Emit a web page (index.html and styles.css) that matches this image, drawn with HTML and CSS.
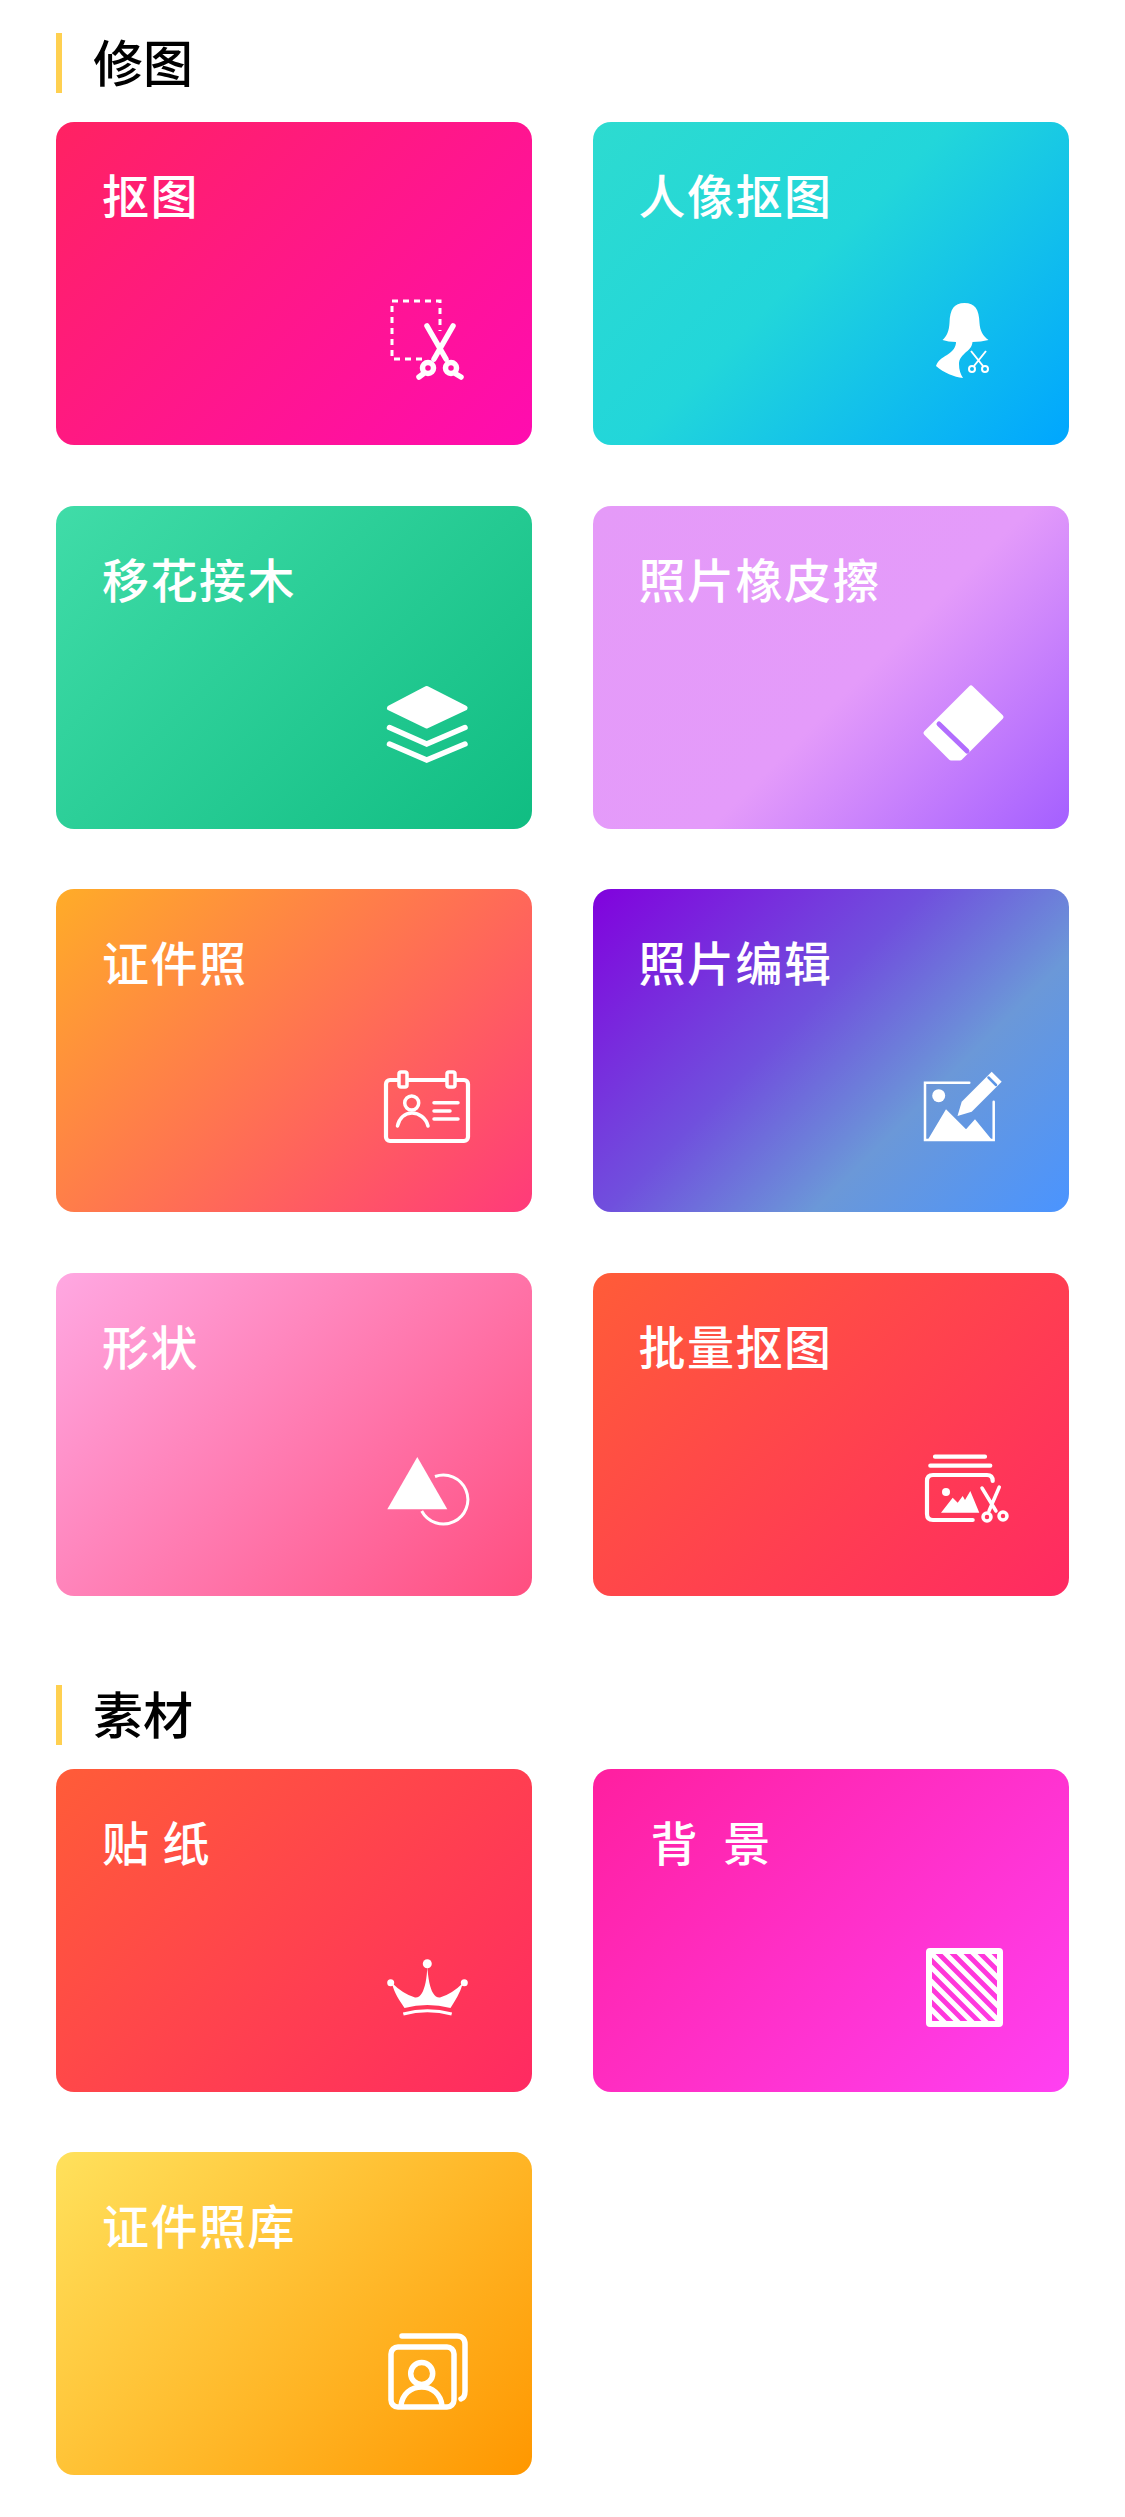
FILE: index.html
```html
<!DOCTYPE html>
<html lang="zh-CN">
<head>
    <meta charset="UTF-8">
    <meta name="viewport" content="width=device-width, initial-scale=1.0">
    <title>修图</title>
    <link rel="stylesheet" href="styles.css">
</head>
<body>
    <main>
        <section class="section">
            <h2 class="section-title">修图</h2>
            <div class="grid">
                <a class="card cutout">
                    <span class="card-title">抠图</span>
                    <svg class="icon" viewBox="0 0 100 100">
                        <path class="dash" d="M44 70H14V12H62V42"/>
                        <path class="blade" d="M49 37L68 70M75 37L56 70"/>
                        <circle class="blade" cx="50" cy="79" r="5.500"/>
                        <circle class="blade" cx="73" cy="79" r="5.500"/>
                        <path class="blade" d="M45 85L41 88M78 85L83 88"/>
                    </svg>
                </a>
                <a class="card portrait">
                    <span class="card-title">人像抠图</span>
                    <svg class="icon" viewBox="0 0 100 100">
                        <path class="solid" d="M27.500 51C32 47 34 42 34.500 34C35 20 39 14 49.500 14C60 14 64 20 64.500 34C65 42 68 47 73.500 51Q66 53 57.500 53C57 58 54 61 50 64C47 67 44 70 44 75C44 81 45.500 85 48 89C39 88 29 84 21 77C23 71 27 69 32 66C38 62 41 58 41 53Q33 53 27.500 51Z"/>
                        <path class="hair" d="M56 62L68 77M71 62L59 77"/>
                        <circle class="hair" cx="57" cy="80" r="3"/>
                        <circle class="hair" cx="70" cy="80" r="3"/>
                    </svg>
                </a>
                <a class="card layers">
                    <span class="card-title">移花接木</span>
                    <svg class="icon" viewBox="0 0 100 100">
                        <path class="solid round" d="M48.700 15.500L87 35L48.700 53L11.500 35Z"/>
                        <path class="heavy" d="M11.500 54.500L48.700 71L87 54.500M11.500 71L48.700 87L87 71"/>
                    </svg>
                </a>
                <a class="card eraser">
                    <span class="card-title">照片橡皮擦</span>
                    <svg class="icon" viewBox="0 0 100 100">
                        <path class="solid round" d="M56 15L86 44L45 85H36L11 60Z"/>
                        <path class="slit" d="M24 51L52 78"/>
                    </svg>
                </a>
                <a class="card idcard">
                    <span class="card-title">证件照</span>
                    <svg class="icon" viewBox="0 0 100 100">
                        <rect class="bold" x="8" y="24" width="82" height="61" rx="4"/>
                        <rect class="tab" x="21" y="16" width="8" height="15" rx="2"/>
                        <rect class="tab" x="69" y="16" width="8" height="15" rx="2"/>
                        <circle class="line" cx="33.700" cy="47" r="7"/>
                        <path class="line" d="M19.500 70C21 62 27 57 34 57C41 57 48 62 50 70"/>
                        <path class="line" d="M56 46.700H80M56 55H72M56 63H80"/>
                    </svg>
                </a>
                <a class="card editor">
                    <span class="card-title">照片编辑</span>
                    <svg class="icon" viewBox="0 0 100 100">
                        <path class="thin" d="M54.300 26.700H10V84H78.700V45.700"/>
                        <circle class="solid" cx="23.700" cy="39.700" r="6.500"/>
                        <path class="solid" d="M12.700 84L31 53.300L51 73.300L60 63.300L77 84Z"/>
                        <path class="solid" d="M42.500 60L46.700 45.700L76.700 15.700L86.700 25.700L56.700 55.700Z"/>
                        <path class="pencil" d="M73.500 21.500L81 29"/>
                    </svg>
                </a>
                <a class="card shape">
                    <span class="card-title">形状</span>
                    <svg class="icon" viewBox="0 0 100 100">
                        <path class="solid" d="M39.300 17L69.300 69.300H9.300Z"/>
                        <path class="ring" d="M57 36.500A24.500 24.500 0 1 1 43.700 71"/>
                    </svg>
                </a>
                <a class="card batch">
                    <span class="card-title">批量抠图</span>
                    <svg class="icon" viewBox="0 0 100 100">
                        <path class="bold" d="M20 16.700H70M15.300 25.700H75.300"/>
                        <path class="bold" d="M77.700 41C77.700 37 75.700 35 72 35H18C14 35 12 37 12 41V74C12 78 14 80 18 80H57.700"/>
                        <circle class="solid" cx="31" cy="52" r="4"/>
                        <path class="solid" d="M26 72.700L37.700 57.700L42.700 62.700L47.700 56L50 60L55.300 51L64.300 72.700Z"/>
                        <path class="snip" d="M67 48L81 71M84.300 47L74 71"/>
                        <circle class="snip" cx="72" cy="77" r="4"/>
                        <circle class="snip" cx="88" cy="76" r="4"/>
                    </svg>
                </a>
            </div>
        </section>
        <section class="section material">
            <h2 class="section-title">素材</h2>
            <div class="grid">
                <a class="card sticker">
                    <span class="card-title">贴 纸</span>
                    <svg class="icon" viewBox="0 0 100 100">
                        <circle class="solid" cx="49.300" cy="27.700" r="4.500"/>
                        <circle class="solid" cx="12.700" cy="46.700" r="3.500"/>
                        <circle class="solid" cx="86.300" cy="46.700" r="3.500"/>
                        <path class="solid" d="M49.300 30C50 42 52 52 55 57Q58 62 62 61.500Q74 58 85 47C82 57 77 65 72.500 72Q49.300 66 26.500 72C22 65 16 57 14 47Q25 58 37 61.500Q41 62 44 57C47 52 49 42 49.300 30Z"/>
                        <path class="band" d="M25.300 78Q49.300 71.500 73.700 78"/>
                    </svg>
                </a>
                <a class="card backdrop">
                    <span class="card-title">&nbsp;背&nbsp;&nbsp;景</span>
                    <svg class="icon" viewBox="0 0 100 100">
                        <defs>
                            <clipPath id="hatch-box">
                                <rect x="14" y="15" width="71" height="73"/>
                            </clipPath>
                        </defs>
                        <rect class="frame" x="14" y="15" width="71" height="73" rx="1"/>
                        <path class="stripes" clip-path="url(#hatch-box)" d="M-56 15L17 88M-42 15L31 88M-28 15L45 88M-14 15L59 88M0 15L73 88M14 15L87 88M28 15L101 88M42 15L115 88M56 15L129 88M70 15L143 88"/>
                    </svg>
                </a>
                <a class="card library">
                    <span class="card-title">证件照库</span>
                    <svg class="icon" viewBox="0 0 100 100">
                        <rect class="heavy" x="13" y="28" width="63" height="60" rx="7"/>
                        <path class="heavy" d="M24 17H79C84 17 87 20 87 25V72C87 76 86 79 83 80"/>
                        <circle class="heavy" cx="43.700" cy="54.500" r="11"/>
                        <path class="heavy" d="M23 87C24 75 33 68 43.700 68C54 68 63 75 64 87"/>
                    </svg>
                </a>
            </div>
        </section>
    </main>
</body>
</html>
```

FILE: styles.css
```css
* {
    box-sizing: border-box;
    margin: 0;
    padding: 0;
}

html,
body {
    background-color: #fff;
}

body {
    width: 1125px;
    height: 2517px;
    overflow: hidden;
    font-family: "Noto Sans CJK SC", "Noto Sans", sans-serif;
}

main {
    padding: 33px 56px 0 56px;
}

.material {
    margin-top: 89px;
}

.section-title {
    height: 60px;
    margin-bottom: 29px;
    padding-left: 31px;
    border-left: 6px solid #ffd050;
    font-size: 50px;
    font-weight: 500;
    line-height: 55px;
    color: #000;
}

.material .section-title {
    margin-bottom: 24px;
}

.grid {
    display: grid;
    grid-template-columns: 476px 476px;
    grid-auto-rows: 323px;
    column-gap: 60.500px;
    row-gap: 60.500px;
}

.card {
    display: flex;
    flex-direction: column;
    padding: 43px 54px 56px 46px;
    border-radius: 18px;
    color: #fff;
}

.card-title {
    font-size: 47px;
    font-weight: 500;
    line-height: 58px;
    letter-spacing: 1.500px;
}

.icon {
    width: 100px;
    height: 100px;
    margin-top: auto;
    margin-left: auto;
    flex: none;
}

.cutout   { background: linear-gradient(135deg, #ff2262, #ff0cb0); }
.portrait { background: linear-gradient(135deg, #2ddbd0 0%, #22d6da 45%, #00a6ff 100%); }
.layers   { background: linear-gradient(135deg, #40dca8, #10bd82); }
.eraser   { background: linear-gradient(135deg, #e59af8 0%, #e49bfa 55%, #a45fff 100%); }
.idcard   { background: linear-gradient(135deg, #ffac28, #ff3a7a); }
.editor   { background: linear-gradient(135deg, #8102dd 0%, #7050dd 42%, #6b98d8 68%, #4a94ff 100%); }
.shape    { background: linear-gradient(135deg, #ffa8e2, #ff4e80); }
.batch    { background: linear-gradient(135deg, #ff5c38, #ff2a62); }
.sticker  { background: linear-gradient(135deg, #ff5c38, #ff2a62); }
.backdrop { background: linear-gradient(135deg, #ff1f9f, #ff40f2); }
.library  { background: linear-gradient(135deg, #ffe15c, #ff9700); }

/* icon parts */
.solid {
    fill: #fff;
}

.round {
    stroke: #fff;
    stroke-width: 5;
    stroke-linejoin: round;
}

.line,
.bold,
.heavy,
.thin,
.hair,
.dash,
.band,
.frame,
.stripes,
.tab,
.blade,
.snip,
.ring {
    fill: none;
    stroke: #fff;
}

.line {
    stroke-width: 3.500;
    stroke-linecap: round;
}

.bold {
    stroke-width: 4.200;
    stroke-linecap: round;
}

.heavy {
    stroke-width: 5.500;
    stroke-linecap: round;
}

.thin {
    stroke-width: 2.500;
    stroke-linecap: round;
}

.hair {
    stroke-width: 2;
}

.dash {
    stroke-width: 3;
    stroke-dasharray: 6 5;
}

.band {
    stroke-width: 3.200;
}

.frame {
    stroke-width: 6;
}

.stripes {
    stroke-width: 5;
}

.blade {
    stroke-width: 5.500;
    stroke-linecap: round;
}

.snip {
    stroke-width: 3.500;
    stroke-linecap: round;
}

.ring {
    stroke-width: 3;
}

.slit {
    fill: none;
    stroke: #b26dfe;
    stroke-width: 5;
    stroke-linecap: round;
}

.tab {
    fill: #ff6068;
    stroke-width: 3.500;
}

.pencil {
    fill: none;
    stroke: #5c96e6;
    stroke-width: 2.500;
    stroke-linecap: round;
}
```
